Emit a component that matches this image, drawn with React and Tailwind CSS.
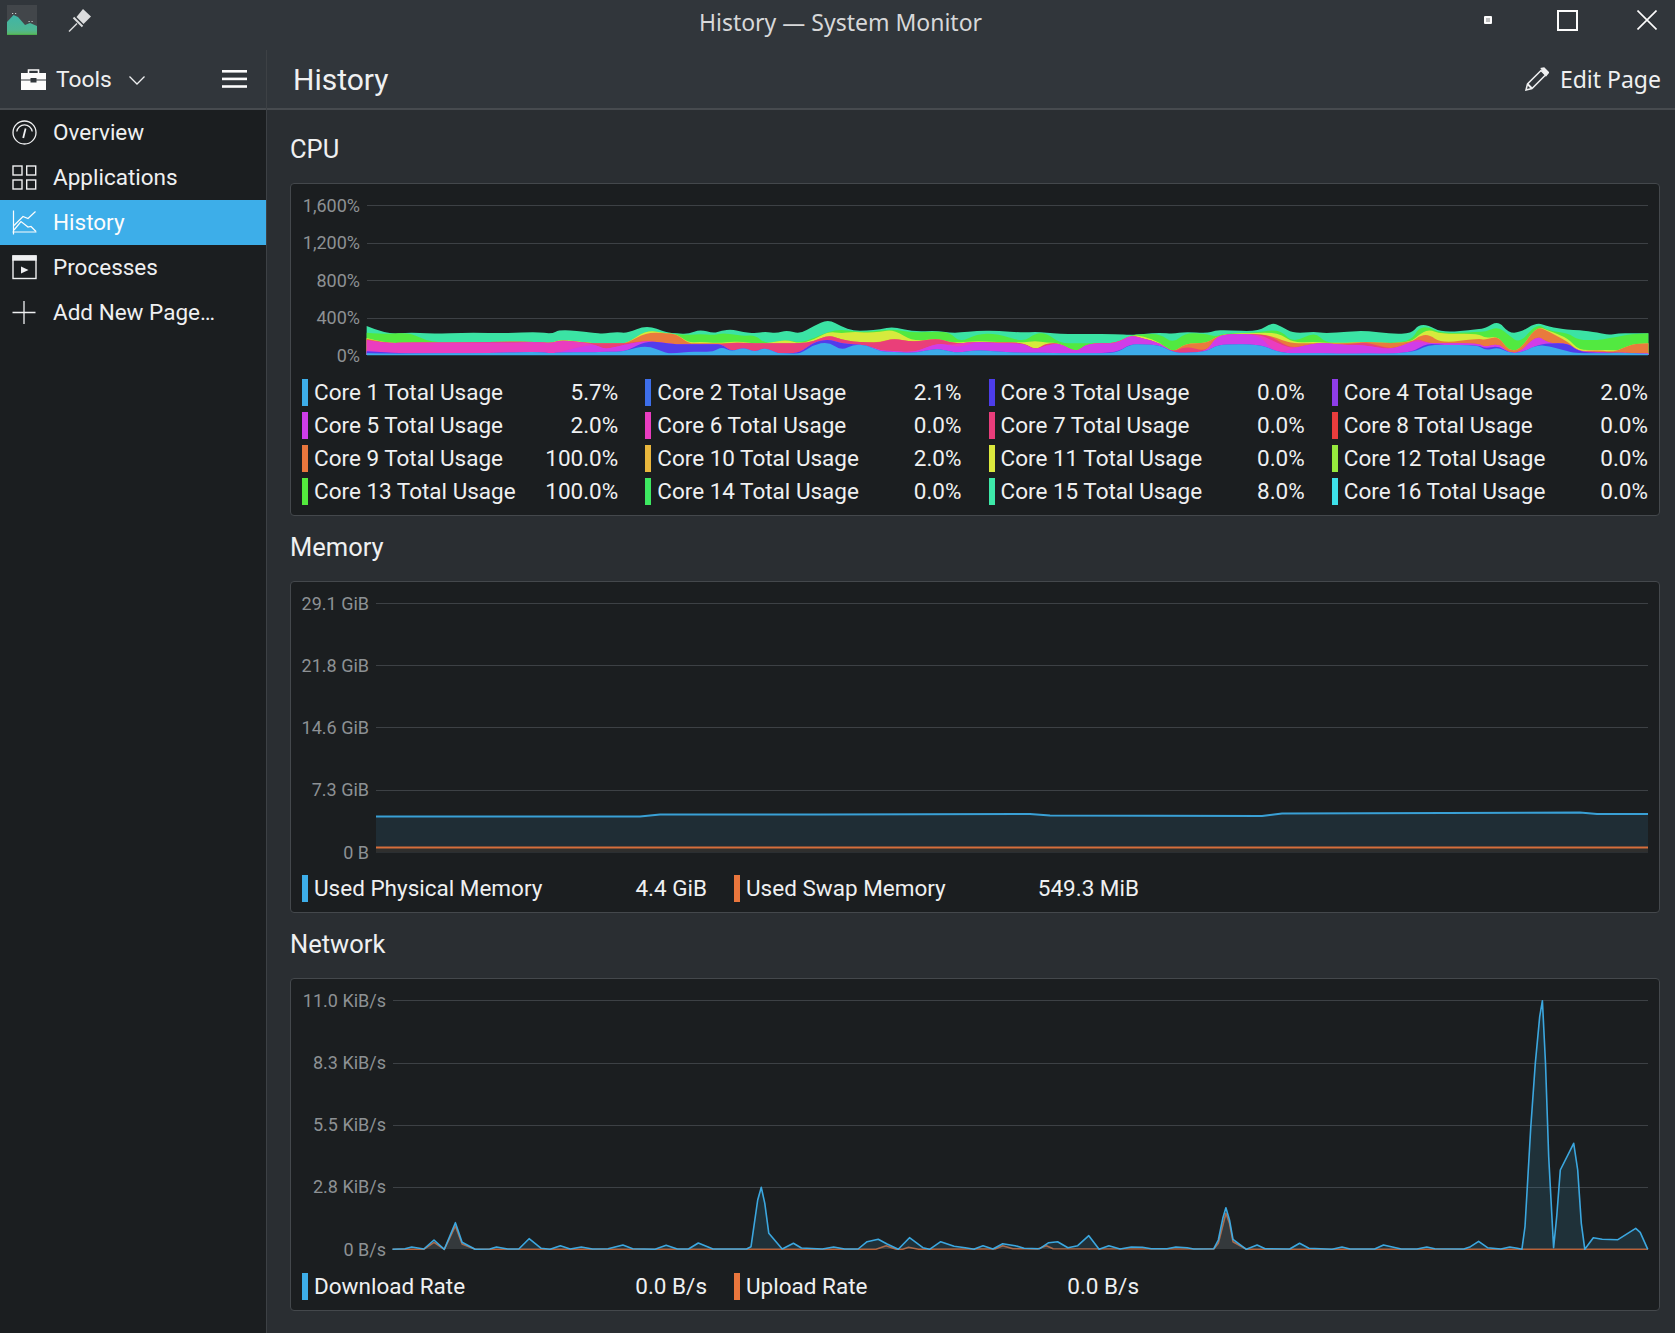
import { useMemo } from 'react';

const coreColors = [
  '#3daee9', '#3d6ee9', '#4d3de9', '#8e3de9',
  '#ce3de9', '#e93dc1', '#e93d7b', '#e93d3d',
  '#e9763d', '#e9b73d', '#dbe93d', '#96e93d',
  '#53e93d', '#3de961', '#3de9a8', '#3de0e9',
];

const coreValues = [
  '5.7%', '2.1%', '0.0%', '2.0%',
  '2.0%', '0.0%', '0.0%', '0.0%',
  '100.0%', '2.0%', '0.0%', '0.0%',
  '100.0%', '0.0%', '8.0%', '0.0%',
];

// stacked layers, painted from the top one down
const bandColors = ['#3daee9', '#4d3de9', '#ce3de9', '#e93dc1', '#e93d7b', '#e9763d', '#dbe93d', '#53e93d', '#3de9a8'];

// knots: zoom x, then the top of each band (zoomed 3x, baseline is 135)
const strip1 = [
  [20, 130, 124, 122, 90, 90, 86, 84, 68, 48], [80, 131, 128, 128, 100, 100, 100, 100, 73, 73],
  [150, 131, 130, 130, 97, 97, 97, 97, 67, 67], [210, 130, 130, 130, 98, 98, 98, 98, 98, 71],
  [330, 130, 130, 130, 97, 97, 97, 97, 97, 68], [440, 128, 128, 128, 98, 95, 95, 95, 95, 70],
  [530, 125, 125, 125, 95, 95, 95, 95, 95, 65], [575, 130, 130, 130, 100, 100, 100, 100, 100, 72],
  [600, 127, 127, 127, 90, 90, 90, 88, 88, 58], [700, 127, 127, 100, 100, 100, 100, 100, 100, 68],
  [730, 125, 125, 118, 118, 100, 100, 100, 100, 72], [770, 125, 125, 110, 110, 100, 100, 100, 100, 65],
  [800, 122, 122, 103, 103, 100, 100, 100, 100, 70], [860, 105, 92, 92, 92, 92, 67, 60, 60, 45],
  [920, 130, 100, 100, 100, 100, 70, 70, 70, 68], [950, 130, 103, 103, 103, 103, 72, 72, 72, 70],
  [985, 125, 103, 103, 103, 103, 100, 98, 75, 72], [1020, 125, 103, 103, 103, 103, 100, 95, 72, 58],
  [1060, 125, 103, 103, 103, 103, 100, 98, 75, 70], [1085, 110, 103, 103, 103, 103, 100, 98, 70, 62],
  [1115, 125, 125, 125, 125, 98, 98, 95, 72, 58], [1150, 112, 112, 112, 112, 98, 98, 96, 78, 66],
  [1185, 127, 127, 127, 127, 100, 100, 100, 75, 70], [1215, 112, 112, 112, 112, 100, 100, 100, 100, 65],
  [1250, 130, 130, 130, 130, 100, 100, 95, 95, 70], [1280, 130, 130, 130, 130, 100, 100, 90, 90, 60],
];
const strip2 = [
  [30, 132, 128, 128, 128, 100, 100, 100, 98, 72], [70, 105, 97, 97, 97, 95, 95, 90, 85, 48],
  [115, 95, 87, 87, 87, 75, 75, 65, 65, 28], [155, 122, 100, 100, 100, 88, 88, 70, 58, 50],
  [190, 103, 103, 103, 103, 95, 95, 65, 65, 62], [230, 105, 105, 105, 105, 97, 97, 68, 65, 62],
  [270, 125, 125, 122, 122, 98, 97, 66, 62, 58], [310, 125, 125, 122, 122, 85, 85, 58, 58, 50],
  [370, 130, 130, 128, 128, 97, 97, 95, 68, 65], [440, 115, 115, 100, 100, 85, 85, 85, 64, 62],
  [480, 125, 125, 105, 105, 97, 97, 97, 68, 68], [510, 128, 128, 112, 100, 100, 100, 97, 97, 68],
  [560, 120, 120, 95, 95, 95, 95, 93, 72, 63], [620, 125, 125, 100, 100, 98, 98, 96, 70, 62],
  [700, 128, 128, 100, 100, 97, 97, 97, 97, 68], [735, 128, 128, 120, 120, 120, 120, 93, 70, 65],
  [770, 128, 128, 105, 105, 100, 100, 97, 70, 68], [810, 130, 130, 100, 100, 100, 100, 100, 100, 72],
  [860, 130, 130, 128, 128, 128, 128, 128, 100, 72], [890, 130, 130, 100, 100, 100, 100, 100, 100, 72],
  [980, 130, 128, 103, 100, 100, 100, 100, 100, 72], [1020, 103, 103, 75, 75, 75, 75, 75, 75, 75],
  [1060, 103, 103, 85, 85, 85, 85, 78, 72, 72], [1110, 105, 105, 100, 100, 100, 100, 98, 72, 68],
  [1150, 128, 128, 128, 128, 128, 128, 128, 100, 72], [1185, 128, 128, 128, 128, 108, 100, 100, 68, 65],
  [1250, 125, 125, 125, 125, 125, 100, 100, 72, 70],
];
const strip3 = [
  [0, 108, 108, 85, 85, 85, 82, 82, 80, 62], [30, 103, 103, 72, 72, 72, 72, 72, 70, 60],
  [130, 103, 103, 72, 72, 72, 72, 68, 68, 65], [170, 118, 118, 118, 90, 80, 78, 68, 60, 37],
  [200, 128, 128, 128, 105, 100, 90, 75, 65, 50], [235, 130, 130, 115, 115, 115, 100, 98, 98, 70],
  [300, 130, 130, 100, 100, 100, 100, 95, 65, 65], [330, 130, 130, 100, 100, 100, 100, 98, 98, 70],
  [400, 132, 132, 105, 105, 105, 100, 98, 98, 65], [450, 130, 130, 105, 105, 95, 95, 95, 95, 62],
  [530, 132, 132, 120, 120, 120, 100, 100, 100, 72], [590, 125, 125, 95, 95, 95, 95, 95, 90, 70],
  [610, 120, 115, 95, 88, 88, 80, 75, 55, 45], [640, 105, 100, 100, 100, 100, 72, 58, 50, 45],
  [680, 105, 105, 100, 100, 100, 100, 72, 72, 68], [790, 105, 105, 100, 100, 100, 85, 70, 65, 58],
  [810, 122, 115, 112, 112, 112, 90, 85, 65, 55], [850, 112, 108, 100, 100, 100, 78, 78, 50, 32],
  [880, 128, 128, 128, 128, 128, 122, 122, 75, 68], [915, 130, 130, 128, 128, 128, 120, 120, 100, 68],
  [965, 105, 105, 75, 75, 75, 48, 48, 40, 37], [1000, 108, 100, 100, 100, 100, 65, 62, 62, 50],
  [1060, 125, 100, 100, 100, 100, 95, 85, 70, 60], [1090, 130, 125, 125, 125, 125, 125, 120, 90, 60],
  [1150, 130, 128, 125, 125, 125, 120, 120, 90, 68], [1180, 130, 128, 128, 128, 128, 125, 120, 85, 75],
  [1210, 128, 128, 128, 128, 128, 122, 122, 80, 70], [1250, 130, 130, 129, 129, 129, 102, 102, 72, 70],
  [1300, 132, 132, 130, 130, 130, 100, 100, 70, 70],
];

const cpuKnots = [
  ...strip1.map(([x, ...t]) => [360 + x / 3, ...t]),
  ...strip2.map(([x, ...t]) => [790 + x / 3, ...t]),
  ...strip3.map(([x, ...t]) => [1215 + x / 3, ...t]),
];

const memLine = [
  [376, 816.5], [640, 816.5], [660, 814.5], [820, 814.5], [1030, 814], [1050, 815.5],
  [1262, 816], [1282, 813.5], [1580, 812.5], [1597, 814], [1648, 814],
];

const netLeft = [
  [252, 298], [280, 296], [295, 291], [322, 297], [345, 270], [368, 298], [393, 218], [408, 277], [437, 298],
  [470, 297], [485, 291], [510, 297], [535, 297], [558, 266], [585, 295], [605, 298], [628, 287], [650, 297],
  [675, 291], [700, 297], [735, 296], [768, 285], [790, 296], [840, 298], [865, 286], [890, 297], [915, 297],
  [937, 279], [970, 297], [1045, 297], [1055, 290], [1070, 150], [1078, 112], [1086, 160], [1095, 250],
  [1125, 297], [1150, 280], [1168, 294], [1215, 297], [1240, 291], [1265, 297], [1295, 297], [1315, 275],
  [1340, 268], [1360, 282], [1385, 298], [1410, 263], [1440, 293], [1455, 298], [1480, 275], [1510, 289],
  [1535, 293], [1555, 298],
];
const netRight = [
  [0, 806], [18, 797], [40, 807], [62, 791], [90, 797], [110, 805], [145, 806], [165, 788], [185, 785],
  [208, 803], [230, 797], [255, 767], [278, 808], [300, 797], [325, 807], [350, 801], [375, 802], [395, 806],
  [430, 806], [450, 801], [475, 803], [490, 807], [535, 806], [545, 780], [555, 715], [562, 683], [570, 720],
  [578, 778], [608, 808], [632, 795], [650, 806], [705, 807], [727, 790], [748, 805], [800, 808], [822, 801],
  [840, 807], [895, 807], [915, 795], [955, 807], [990, 807], [1012, 801], [1030, 806], [1095, 807], [1110, 800],
  [1128, 784], [1148, 803], [1178, 807], [1198, 801], [1215, 805], [1225, 808], [1232, 740], [1245, 440],
  [1255, 250], [1265, 110], [1271, 62], [1278, 250], [1285, 530], [1296, 803], [1303, 710], [1311, 570],
  [1341, 490], [1350, 570], [1358, 730], [1366, 808], [1385, 773], [1405, 778], [1440, 779], [1480, 745],
  [1490, 757], [1507, 808],
];
const upLeft = [
  [252, 298], [322, 298], [345, 277], [368, 298], [393, 228], [408, 282], [437, 298], [1335, 298], [1358, 287],
  [1380, 298], [1395, 298], [1408, 292], [1430, 298],
];
const upRight = [
  [0, 807], [45, 807], [62, 797], [85, 806], [140, 807], [160, 797], [175, 806], [535, 807], [545, 790], [562, 700],
  [570, 730], [578, 785], [608, 808], [1507, 808],
];

const fromLeft = ([x, y]) => [280 + x / 2.24, 1150 + y / 3];
const fromRight = ([x, y]) => [975 + x / 2.24, 980 + y / 3];
const download = [...netLeft.map(fromLeft), ...netRight.map(fromRight)];
const upload = [...upLeft.map(fromLeft), ...upRight.map(fromRight)];

const toPoints = (pts) => pts.map(([x, y]) => x.toFixed(1) + ',' + y.toFixed(1)).join(' ');

const smoothPath = (pts, base) => {
  let d = 'M' + pts[0][0] + ' ' + base + ' L' + pts[0][0] + ' ' + pts[0][1];
  for (let i = 1; i < pts.length - 1; i++) {
    const mx = (pts[i][0] + pts[i + 1][0]) / 2;
    const my = (pts[i][1] + pts[i + 1][1]) / 2;
    d += ' Q' + pts[i][0] + ' ' + pts[i][1] + ' ' + mx + ' ' + my;
  }
  const last = pts[pts.length - 1];
  return d + ' L' + last[0] + ' ' + last[1] + ' L' + last[0] + ' ' + base + ' Z';
};

function Grid({ lines, x1, x2 }) {
  return lines.map((y) => (
    <line key={y} x1={x1} x2={x2} y1={y} y2={y} stroke="#3d4145" strokeWidth="1" />
  ));
}

function CpuPlot() {
  const bands = useMemo(() => {
    const list = [];
    for (let b = 8; b >= 0; b--) {
      const pts = cpuKnots.map((k) => [k[0], 310 + k[b + 1] / 3]);
      list.push({ color: bandColors[b], d: smoothPath(pts, 355) });
    }
    return list;
  }, []);
  return (
    <svg className="block w-[1281px] h-[150px] overflow-visible" viewBox="367 205 1281 150">
      <Grid lines={[205.5, 243.5, 280.5, 318.5]} x1={367} x2={1648} />
      {bands.map((b) => (
        <path key={b.color} d={b.d} fill={b.color} fillOpacity="0.97" />
      ))}
      <line x1={367} x2={1648} y1={354.5} y2={354.5} stroke="#3daee9" strokeWidth="1.5" />
    </svg>
  );
}

function MemoryPlot() {
  const top = [...memLine, [1648, 847], [376, 847]];
  return (
    <svg className="block w-[1272px] h-[249px] overflow-visible" viewBox="376 603 1272 249">
      <Grid lines={[603.5, 665.5, 727.5, 790.5, 852]} x1={376} x2={1648} />
      <polygon points={toPoints(top)} fill="#1f2d35" />
      <polyline points={toPoints(memLine)} fill="none" stroke="#3daee9" strokeOpacity="0.9" strokeWidth="2" />
      <rect x="376" y="847" width="1272" height="5" fill="#2f2f2e" />
      <line x1={376} x2={1648} y1={847.5} y2={847.5} stroke="#e9763d" strokeOpacity="0.9" strokeWidth="2" />
    </svg>
  );
}

function NetworkPlot() {
  const downArea = [...download, [1648, 1249], [393, 1249]];
  const upArea = [...upload, [1648, 1249], [393, 1249]];
  return (
    <svg className="block w-[1255px] h-[249px] overflow-visible" viewBox="393 1000 1255 249">
      <Grid lines={[1000.5, 1063.5, 1125.5, 1187.5]} x1={393} x2={1648} />
      <polygon points={toPoints(upArea)} fill="#e9763d" fillOpacity="0.12" />
      <polyline points={toPoints(upload)} fill="none" stroke="#e9763d" strokeOpacity="0.75" strokeWidth="1.6" strokeLinejoin="round" />
      <polygon points={toPoints(downArea)} fill="#3daee9" fillOpacity="0.13" />
      <polyline points={toPoints(download)} fill="none" stroke="#3daee9" strokeOpacity="0.95" strokeWidth="1.6" strokeLinejoin="round" />
    </svg>
  );
}

function YLabels({ labels, className }) {
  return (
    <div className={'flex flex-col justify-between items-end mt-[0.5px] -mb-[0.5px] whitespace-nowrap text-[18px] leading-[20px] text-[#8d9194] ' + className}>
      {labels.map((l) => (
        <div key={l}>{l}</div>
      ))}
    </div>
  );
}

function LegendItem({ color, label, value }) {
  return (
    <div className="flex items-center h-[27px] text-[22.5px] text-[#eff0f1]">
      <div className="w-[6px] h-[27px] mr-[6px] shrink-0" style={{ background: color }} />
      <span className="flex-1 whitespace-nowrap">{label}</span>
      <span className="whitespace-nowrap">{value}</span>
    </div>
  );
}

function Section({ title, children }) {
  return (
    <section>
      <h2 className="h-[30px] mb-[19px] text-[25.5px] leading-[31px] text-[#eff0f1]">{title}</h2>
      <div className="bg-[#1b1e20] border border-[#44484c] rounded-[4px] pt-[11px] px-[11px] pb-[10px]">
        {children}
      </div>
    </section>
  );
}

function OverviewIcon() {
  return (
    <svg width="25" height="25" viewBox="0 0 25 25" fill="none" stroke="#eff0f1" strokeWidth="1.3">
      <circle cx="12.5" cy="12.5" r="11.5" />
      <path d="M4.8 11.5a7.8 7.8 0 0 1 15.4 0" />
      <path d="M11.2 18l2.4-9.5" strokeWidth="1.8" />
    </svg>
  );
}

function AppsIcon() {
  return (
    <svg width="25" height="25" viewBox="0 0 25 25" fill="none" stroke="#eff0f1" strokeWidth="1.4">
      <rect x="1" y="1" width="9" height="9" />
      <rect x="14.7" y="1" width="9" height="9" />
      <rect x="1" y="15" width="9" height="9" />
      <rect x="14.7" y="15" width="9" height="9" />
    </svg>
  );
}

function HistoryIcon() {
  return (
    <svg width="25" height="25" viewBox="0 0 25 25" fill="none" stroke="#fcfcfc" strokeWidth="1.2">
      <path d="M1.5 0.5V24.5M0.5 22H24.5" />
      <path d="M2 15.5L11 6.5L16 8.5L23.5 1.5" />
      <path d="M2 20L9 11.5L16 17L19 16.5L24 21.5" />
    </svg>
  );
}

function ProcessesIcon() {
  return (
    <svg width="25" height="25" viewBox="0 0 25 25" fill="none" stroke="#eff0f1" strokeWidth="1.4">
      <rect x="1" y="1" width="23" height="22.5" />
      <rect x="1" y="1" width="23" height="4" fill="#eff0f1" />
      <path d="M9 11.5V18.5L16.5 15Z" fill="#eff0f1" stroke="none" />
    </svg>
  );
}

function PlusIcon() {
  return (
    <svg width="25" height="25" viewBox="0 0 25 25" fill="none" stroke="#eff0f1" strokeWidth="1.3">
      <path d="M12 1V24M0.5 12.5H23.5" />
    </svg>
  );
}

const pages = [
  { name: 'Overview', Icon: OverviewIcon },
  { name: 'Applications', Icon: AppsIcon },
  { name: 'History', Icon: HistoryIcon },
  { name: 'Processes', Icon: ProcessesIcon },
  { name: 'Add New Page…', Icon: PlusIcon },
];

function TitleBar() {
  return (
    <div className="grid grid-cols-[1fr_auto_1fr] items-center h-[50px] bg-[#31363b] font-['Noto_Sans',sans-serif]">
      <div className="flex items-center">
        <svg className="ml-[7px] mb-[10px]" width="30" height="30" viewBox="0 0 30 30">
          <defs>
            <linearGradient id="hill" x1="0" y1="0" x2="0" y2="1">
              <stop offset="0" stopColor="#3fb5a8" />
              <stop offset="0.75" stopColor="#4fb692" />
              <stop offset="1" stopColor="#5cb85c" />
            </linearGradient>
          </defs>
          <rect width="30" height="30" fill="#42464a" />
          <path d="M0 17L6.5 10L11 12L18 20L23 18L30 21V30H0Z" fill="url(#hill)" />
          <rect y="29" width="30" height="1" fill="#4caf50" />
          <path d="M5 8.5H6.2M8 8.5H9.2M21.5 16.5H22.7M24.5 16.5H25.7" stroke="#c9cbcc" strokeWidth="1.2" />
        </svg>
        <svg className="ml-[31px] mb-[10px]" width="24" height="24" viewBox="0 0 24 24" fill="#dcddde">
          <path d="M15 1L23 8.5L15.5 16L8.5 9Z" />
          <path d="M5.5 9.5L14.5 18.5" stroke="#dcddde" strokeWidth="2" />
          <path d="M1 23.5L9 15.5" stroke="#dcddde" strokeWidth="1.4" />
        </svg>
      </div>
      <div className="text-[23px] leading-none pb-[5px] pl-[6px] text-[#d7d8d9]">History — System Monitor</div>
      <div className="flex items-center justify-end pb-[10px]">
        <div className="w-[8px] h-[8px] mr-[65px] rounded-[1px] border-2 border-[#fcfcfc] bg-[#bcbdbe]" />
        <div className="w-[21px] h-[21px] mr-[59px] border-2 border-[#fcfcfc]" />
        <svg className="mr-[18px]" width="20" height="20" viewBox="0 0 20 20" stroke="#fcfcfc" strokeWidth="1.6">
          <path d="M0.5 0.5L19.5 19.5M19.5 0.5L0.5 19.5" />
        </svg>
      </div>
    </div>
  );
}

function Sidebar() {
  return (
    <aside className="w-[267px] shrink-0 bg-[#1b1e20] border-r border-[#3d4145]">
      <div className="flex items-center h-[60px] bg-[#31363b] border-b-2 border-[#474b4f] pl-[21px] pr-[19px]">
        <svg width="25" height="21" viewBox="0 0 25 21" fill="#fcfcfc">
          <path d="M7.5 4V1H17.5V4" fill="none" stroke="#fcfcfc" strokeWidth="1.6" />
          <rect y="4" width="25" height="6.5" />
          <rect y="11.5" width="25" height="9.5" />
          <rect x="9.5" y="9" width="6" height="4.5" fill="#31363b" />
        </svg>
        <span className="ml-[10px] mt-[2px] text-[22.8px] text-[#eff0f1]">Tools</span>
        <svg className="ml-[17px] mt-[3px]" width="16" height="9" viewBox="0 0 16 9" fill="none" stroke="#eff0f1" strokeWidth="1.3">
          <path d="M0.5 0.5L8 8L15.5 0.5" />
        </svg>
        <svg className="ml-auto" width="25" height="18" viewBox="0 0 25 18" fill="#fcfcfc">
          <rect width="25" height="2.6" />
          <rect y="7.6" width="25" height="2.6" />
          <rect y="15.2" width="25" height="2.6" />
        </svg>
      </div>
      <nav>
        {pages.map(({ name, Icon }) => (
          <div
            key={name}
            className={
              name === 'History'
                ? 'flex items-center gap-[16px] h-[45px] pl-3 bg-[#3daee9] text-[#fcfcfc] text-[22.5px]'
                : 'flex items-center gap-[16px] h-[45px] pl-3 text-[#eff0f1] text-[22.5px]'
            }
          >
            <Icon />
            <span>{name}</span>
          </div>
        ))}
      </nav>
    </aside>
  );
}

function Header() {
  return (
    <div className="flex items-center justify-between h-[60px] bg-[#31363b] border-b-2 border-[#474b4f] pl-[26px] pr-[14px]">
      <h1 className="mt-[1px] text-[30px] text-[#eff0f1]">History</h1>
      <div className="flex items-center gap-[11px] font-['Noto_Sans',sans-serif] text-[23px] text-[#eff0f1]">
        <svg width="24" height="24" viewBox="0 0 24 24" fill="none" stroke="#eff0f1" strokeWidth="1.5">
          <path d="M1 23L2.5 17L16 3.5L20.5 8L7 21.5Z" />
          <path d="M16.5 1.5L19 1L23.5 5.5L21 8.5Z" fill="#eff0f1" />
          <path d="M2.5 17L7 21.5" strokeWidth="2" />
        </svg>
        <span>Edit Page</span>
      </div>
    </div>
  );
}

export default function App() {
  return (
    <div className="w-[1675px] h-[1333px] overflow-hidden bg-[#2a2e32] font-[Roboto,sans-serif]">
      <TitleBar />
      <div className="flex h-[1283px]">
        <Sidebar />
        <main className="flex-1">
          <Header />
          <div className="flex flex-col gap-[16px] pt-[24px] pl-[23px] pr-[15px]">
            <Section title="CPU">
              <div className="flex gap-[7px] h-[170px]">
                <YLabels className="w-[58px]" labels={['1,600%', '1,200%', '800%', '400%', '0%']} />
                <div className="py-[10px]">
                  <CpuPlot />
                </div>
              </div>
              <div className="grid grid-cols-4 gap-x-[27px] gap-y-[6px] mt-[14px]">
                {coreColors.map((color, i) => (
                  <LegendItem key={color} color={color} label={'Core ' + (i + 1) + ' Total Usage'} value={coreValues[i]} />
                ))}
              </div>
            </Section>
            <Section title="Memory">
              <div className="flex gap-[7px] h-[269px]">
                <YLabels className="w-[67px]" labels={['29.1 GiB', '21.8 GiB', '14.6 GiB', '7.3 GiB', '0 B']} />
                <div className="py-[10px]">
                  <MemoryPlot />
                </div>
              </div>
              <div className="grid grid-cols-[405px_405px] gap-x-[27px] mt-[13px]">
                <LegendItem color="#3daee9" label="Used Physical Memory" value="4.4 GiB" />
                <LegendItem color="#e9763d" label="Used Swap Memory" value="549.3 MiB" />
              </div>
            </Section>
            <Section title="Network">
              <div className="flex gap-[7px] h-[269px]">
                <YLabels className="w-[84px]" labels={['11.0 KiB/s', '8.3 KiB/s', '5.5 KiB/s', '2.8 KiB/s', '0 B/s']} />
                <div className="py-[10px]">
                  <NetworkPlot />
                </div>
              </div>
              <div className="grid grid-cols-[405px_405px] gap-x-[27px] mt-[14px]">
                <LegendItem color="#3daee9" label="Download Rate" value="0.0 B/s" />
                <LegendItem color="#e9763d" label="Upload Rate" value="0.0 B/s" />
              </div>
            </Section>
          </div>
        </main>
      </div>
    </div>
  );
}
